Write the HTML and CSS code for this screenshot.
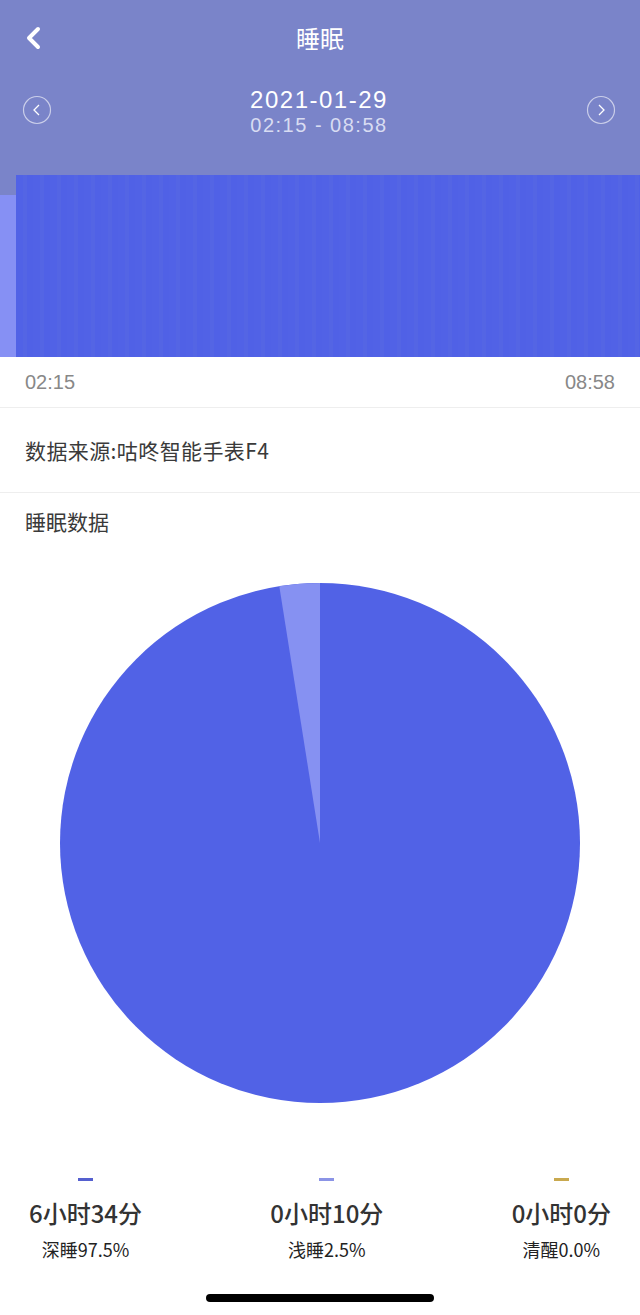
FILE: index.html
```html
<!DOCTYPE html>
<html lang="zh-CN">
<head>
  <meta charset="UTF-8">
  <title>睡眠</title>
  <link rel="stylesheet" href="styles.css">
</head>
<body>

  <div class="header">
    <div class="navbar">
      <svg class="back" width="20" height="24" viewBox="0 0 20 24">
        <path d="M14 3 L5 12 L14 21" fill="none" stroke="#fff" stroke-width="4" stroke-linecap="round" stroke-linejoin="round"/>
      </svg>
      <div class="title">睡眠</div>
    </div>

    <div class="datebar">
      <svg class="circle-btn" width="30" height="30" viewBox="0 0 30 30">
        <circle cx="15" cy="15" r="13.5" fill="none" stroke="rgba(255,255,255,0.6)" stroke-width="1.2"/>
        <path d="M17 10 L12 15 L17 20" fill="none" stroke="#fff" stroke-width="1.3"/>
      </svg>
      <div class="date">
        <div class="day">2021-01-29</div>
        <div class="range">02:15 - 08:58</div>
      </div>
      <svg class="circle-btn" width="30" height="30" viewBox="0 0 30 30">
        <circle cx="15" cy="15" r="13.5" fill="none" stroke="rgba(255,255,255,0.6)" stroke-width="1.2"/>
        <path d="M13 10 L18 15 L13 20" fill="none" stroke="#fff" stroke-width="1.3"/>
      </svg>
    </div>

    <div class="chart">
      <div class="bar light"></div>
      <div class="bar deep"></div>
    </div>
  </div>

  <div class="times">
    <span>02:15</span>
    <span>08:58</span>
  </div>

  <div class="row source">数据来源:咕咚智能手表F4</div>

  <div class="section">
    <div class="section-title">睡眠数据</div>
    <div class="pie-wrap">
      <svg width="520" height="520" viewBox="0 0 520 520">
        <circle cx="260" cy="260" r="260" fill="#5162e6"/>
        <path d="M260 260 L260 0 A260 260 0 0 0 219.3 3.2 Z" fill="#8691f2"/>
      </svg>
    </div>
  </div>

  <div class="legend">
    <div class="item">
      <div class="dash deep"></div>
      <div class="value">6小时34分</div>
      <div class="label">深睡97.5%</div>
    </div>
    <div class="item">
      <div class="dash light"></div>
      <div class="value">0小时10分</div>
      <div class="label">浅睡2.5%</div>
    </div>
    <div class="item">
      <div class="dash awake"></div>
      <div class="value">0小时0分</div>
      <div class="label">清醒0.0%</div>
    </div>
  </div>

  <div class="home-bar"></div>

</body>
</html>
```

FILE: styles.css
```css
body {
  margin: 0;
  width: 640px;
  height: 1315px;
  font-family: "Liberation Sans", "Noto Sans CJK SC", sans-serif;
  background: #fff;
  color: #333;
  overflow: hidden;
  position: relative;
}

.header {
  background: #7a84c9;
}

.navbar {
  height: 76px;
  display: flex;
  align-items: center;
  justify-content: center;
  position: relative;
}

.back {
  position: absolute;
  left: 24px;
  top: 26px;
}

.title {
  color: #fff;
  font-size: 24px;
  font-family: "Noto Sans CJK SC", sans-serif;
  margin-top: -2px;
}

.datebar {
  display: flex;
  align-items: center;
  justify-content: space-between;
  padding: 0 24px 0 22px;
  height: 70px;
  margin-top: 7px;
}

.circle-btn {
  margin-top: -16px;
}

.date {
  text-align: center;
  margin-top: -13px;
}

.day {
  color: #fff;
  font-size: 24px;
  letter-spacing: 1.5px;
}

.range {
  color: #d8dcf2;
  font-size: 20px;
  letter-spacing: 1.5px;
}

.chart {
  display: flex;
  align-items: flex-end;
  height: 182px;
  margin-top: 22px;
}

.bar {
  height: 100%;
}

.bar.light {
  width: 16px;
  height: 162px;
  background: #8690f4;
}

.bar.deep {
  flex: 1;
  background: repeating-linear-gradient(90deg, #5162e6 0, #5162e6 7px, #5465e4 7px, #5465e4 11px, #5061e6 11px, #5061e6 17px);
}

.times {
  display: flex;
  justify-content: space-between;
  padding: 0 25px;
  height: 50px;
  align-items: center;
  font-size: 20px;
  color: #888;
  border-bottom: 1px solid #eeeeee;
}

.row {
  height: 84px;
  display: flex;
  align-items: center;
  padding: 0 25px;
  font-size: 21px;
  letter-spacing: 0.4px;
  color: #3a3a3a;
  font-family: "Noto Sans CJK SC", sans-serif;
  border-bottom: 1px solid #eeeeee;
}

.section-title {
  padding: 13px 25px 0;
  font-size: 21px;
  color: #3a3a3a;
  font-family: "Noto Sans CJK SC", sans-serif;
}

.pie-wrap {
  display: flex;
  justify-content: center;
  margin-top: 47px;
}

.pie-wrap svg {
  display: block;
}

.legend {
  display: flex;
  justify-content: space-between;
  padding: 0 29px 0 29px;
  margin-top: 75px;
}

.item {
  display: flex;
  flex-direction: column;
  align-items: center;
}

.dash {
  width: 15px;
  height: 3px;
}

.dash.deep {
  background: #5560cf;
}

.dash.light {
  background: #8b94e6;
}

.dash.awake {
  background: #c9a94f;
}

.value {
  font-size: 24px;
  font-weight: 500;
  color: #333;
  margin-top: 14px;
  font-family: "Noto Sans CJK SC", sans-serif;
}

.label {
  font-size: 18px;
  color: #222;
  margin-top: 6px;
  font-family: "Noto Sans CJK SC", sans-serif;
}

.home-bar {
  position: absolute;
  left: 206px;
  bottom: 13px;
  width: 228px;
  height: 8px;
  border-radius: 4px;
  background: #000;
}
```
